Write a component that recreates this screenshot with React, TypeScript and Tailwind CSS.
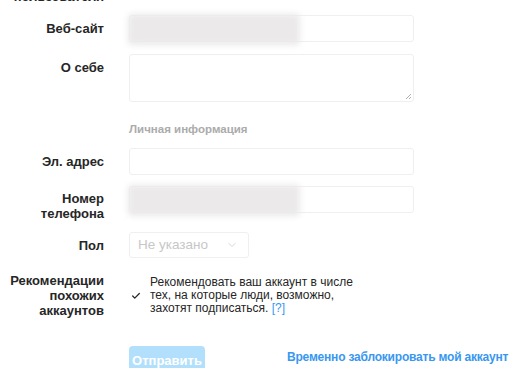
import { ChevronDown, Check } from 'lucide-react';

const font = { fontFamily: '"Liberation Sans", Arial, sans-serif' };

function Label({ children }: { children: React.ReactNode }) {
  return (
    <div className="w-[104px] shrink-0 text-right text-[13px] font-bold leading-[15px] text-[#262626]">
      {children}
    </div>
  );
}

function Field({ blurred }: { blurred?: boolean }) {
  return (
    <div className="relative h-[27px] w-[285px] rounded-[3px] border border-[#efefef] bg-white">
      {blurred && (
        <div className="absolute left-[-2px] top-[-2px] h-[31px] w-[172px] rounded bg-[#ebe9ea] blur-[3px]" />
      )}
    </div>
  );
}

export default function App() {
  return (
    <div className="h-[368px] w-[526px] overflow-hidden bg-white" style={font}>
      <div className="mt-[-11px] flex h-[15px]">
        <Label>пользователя</Label>
      </div>

      {/* Веб-сайт */}
      <div className="mt-[11px] flex items-center gap-[25px]">
        <Label>Веб-сайт</Label>
        <Field blurred />
      </div>

      {/* О себе */}
      <div className="mt-[12px] flex gap-[25px]">
        <div className="pt-[6px]">
          <Label>О себе</Label>
        </div>
        <div className="relative h-[48px] w-[285px] rounded-[3px] border border-[#efefef] bg-white">
          <svg className="absolute bottom-[1px] right-[1px]" width="7" height="7" viewBox="0 0 7 7">
            <path d="M6 1 L1 6 M6 4 L4 6" stroke="#9a9a9a" strokeWidth="0.8" />
          </svg>
        </div>
      </div>

      <div className="ml-[129px] mt-[20px] text-[11.5px] font-bold leading-[14px] text-[#ababab]">
        Личная информация
      </div>

      {/* Эл. адрес */}
      <div className="mt-[12px] flex items-center gap-[25px]">
        <Label>Эл. адрес</Label>
        <Field />
      </div>

      {/* Номер телефона */}
      <div className="mt-[11px] flex items-start gap-[25px]">
        <div className="pt-[5px]">
          <Label>
            Номер
            <br />
            телефона
          </Label>
        </div>
        <Field blurred />
      </div>

      {/* Пол */}
      <div className="mt-[11px] flex items-center gap-[25px]">
        <Label>Пол</Label>
        <div className="flex h-[26px] w-[120px] items-center justify-between rounded-[3px] border border-[#efefef] bg-white pl-[8px] pr-[10px] text-[13.5px] text-[#c7c7c7]">
          <span>Не указано</span>
          <ChevronDown size={12} strokeWidth={1.5} className="text-[#c7c7c7]" />
        </div>
      </div>

      {/* Рекомендации */}
      <div className="mt-[15px] flex items-start gap-[25px]">
        <Label>
          Рекомендации
          <br />
          похожих
          <br />
          аккаунтов
        </Label>
        <div className="flex items-center gap-[9px] pt-[3px]">
          <Check size={10} strokeWidth={3} className="ml-[2px] text-[#262626]" />
          <div className="text-[12px] leading-[13px] text-[#262626]">
            Рекомендовать ваш аккаунт в числе
            <br />
            тех, на которые люди, возможно,
            <br />
            захотят подписаться. <span className="text-[#3897f0]">[?]</span>
          </div>
        </div>
      </div>

      {/* Actions */}
      <div className="mt-[28px] flex items-start">
        <div className="ml-[129px] flex h-[30px] w-[76px] items-center justify-center rounded-[4px] bg-[#b2dffc] text-[13px] font-bold text-white">
          Отправить
        </div>
        <div className="ml-[82px] mt-[2px] whitespace-nowrap text-[12px] font-bold tracking-[-0.2px] text-[#3897f0]">
          Временно заблокировать мой аккаунт
        </div>
      </div>
    </div>
  );
}
